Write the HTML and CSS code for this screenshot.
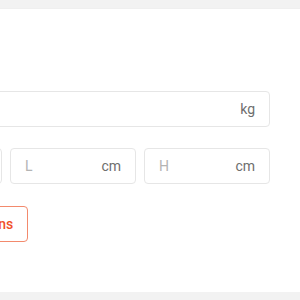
FILE: index.html
```html
<!DOCTYPE html>
<html>
<head>
<meta charset="utf-8">
<link rel="stylesheet" href="styles.css">
</head>
<body>
<div class="card">
  <div class="field">
    <input class="field-input" type="text" placeholder="Weight">
    <span class="unit">kg</span>
  </div>
  <div class="dims">
    <div class="field">
      <input class="field-input" type="text" placeholder="W">
      <span class="unit">cm</span>
    </div>
    <div class="field">
      <input class="field-input" type="text" placeholder="L">
      <span class="unit">cm</span>
    </div>
    <div class="field">
      <input class="field-input" type="text" placeholder="H">
      <span class="unit">cm</span>
    </div>
  </div>
  <button class="btn" type="button">Get shipping options</button>
</div>
</body>
</html>
```
FILE: styles.css
```css
html, body {
  margin: 0;
  padding: 0;
  background: #f2f2f2;
  font-family: Roboto, "Liberation Sans", sans-serif;
  overflow: hidden;
}
.card {
  box-sizing: border-box;
  margin: 9px 0 0 -200px;
  width: 540px;
  height: 283px;
  background: #fff;
  padding: 82px 70px 0 76px;
  box-shadow: 0 1px 3px rgba(0,0,0,0.07);
  display: flex;
  flex-direction: column;
  align-items: flex-start;
}
.field {
  box-sizing: border-box;
  align-self: stretch;
  min-width: 0;
  height: 36px;
  border: 1px solid #e6e6e6;
  border-radius: 4px;
  display: flex;
  align-items: center;
  padding: 0 14px 0 14px;
  background: #fff;
}
.field-input {
  flex: 1;
  width: 0;
  min-width: 0;
  border: 0;
  outline: 0;
  padding: 0;
  font: 14px Roboto, "Liberation Sans", sans-serif;
  color: #555;
  background: transparent;
}
.field-input::placeholder {
  color: #b4b4b4;
}
.unit {
  font-size: 14px;
  color: #6e6e6e;
}
.dims {
  align-self: stretch;
  margin-top: 21px;
  display: grid;
  grid-template-columns: repeat(3, minmax(0, 1fr));
  gap: 8px;
}
.btn {
  margin: 22px 0 0 -7px;
  height: 36px;
  box-sizing: border-box;
  padding: 0 14px;
  border: 1px solid #f38a6d;
  border-radius: 4px;
  background: #fff;
  color: #f1502a;
  font: 500 14px Roboto, "Liberation Sans", sans-serif;
  white-space: nowrap;
}
```
